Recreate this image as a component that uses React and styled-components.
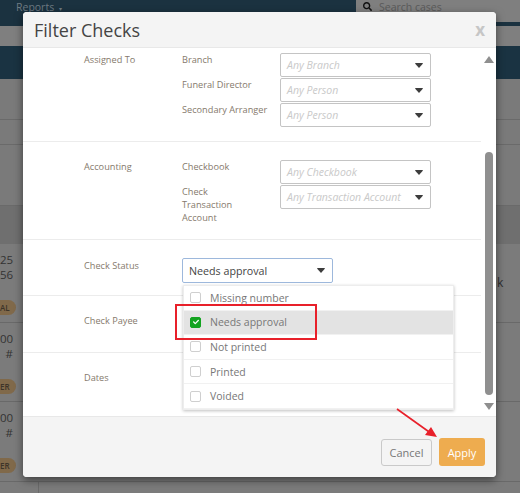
import styled, { createGlobalStyle } from "styled-components";
import { FaSearch, FaCheck } from "react-icons/fa";

const GlobalStyle = createGlobalStyle`
  html, body {
    margin: 0;
    padding: 0;
    background: #7b7b7b;
    font-family: "Open Sans", "Liberation Sans", sans-serif;
  }
  * {
    box-sizing: border-box;
  }
`;

const statuses = [
  { name: "Missing number" },
  { name: "Needs approval", checked: true },
  { name: "Not printed" },
  { name: "Printed" },
  { name: "Voided" },
];

const Caret = () => (
  <CaretIcon viewBox="0 0 8 5" width="8" height="5">
    <path d="M0 0.6 Q0 0 0.8 0 H7.2 Q8 0 8 0.6 L4 5 Z" fill="#3d3d3d" />
  </CaretIcon>
);

const Select = ({ text }) => (
  <SelectBox>
    <Placeholder>{text}</Placeholder>
    <Caret />
  </SelectBox>
);

const BackRow = ({ top, bottom, badge, h }) => (
  <TableRow h={h}>
    <Cell>{top}</Cell>
    <Cell>{bottom}</Cell>
    <Badge>{badge}</Badge>
  </TableRow>
);

const App = () => {
  return (
    <Page>
      <GlobalStyle />
      <TopBar>
        <NavLink>
          Reports <small>▾</small>
        </NavLink>
        <SearchBox>
          <FaSearch size={9} color="#111" />
          <span>Search cases</span>
        </SearchBox>
      </TopBar>
      <SubBar />
      <TealBar />
      <Strip h={14} />
      <Strip h={27} line />
      <Strip h={25} line />
      <Strip h={61} line />
      <DarkBand />
      <BackRow h={79} top="25" bottom="56" badge="AL" />
      <BackRow h={79} top="00" bottom="#" badge="ER" />
      <BackRow h={80} top="00" bottom="#" badge="ER" />
      <BottomStrip />
      <RightText>k</RightText>

      <Modal>
        <Header>
          <Title>Filter Checks</Title>
          <Close>x</Close>
        </Header>
        <Body>
          <Content>
            <Section h={94} pt={5}>
              <GroupLabel>Assigned To</GroupLabel>
              <Fields>
                <FieldRow>
                  <FieldLabel>Branch</FieldLabel>
                  <Select text="Any Branch" />
                </FieldRow>
                <FieldRow>
                  <FieldLabel>Funeral Director</FieldLabel>
                  <Select text="Any Person" />
                </FieldRow>
                <FieldRow>
                  <FieldLabel>Secondary Arranger</FieldLabel>
                  <Select text="Any Person" />
                </FieldRow>
              </Fields>
            </Section>
            <Section h={98} pt={18}>
              <GroupLabel>Accounting</GroupLabel>
              <Fields>
                <FieldRow>
                  <FieldLabel>Checkbook</FieldLabel>
                  <Select text="Any Checkbook" />
                </FieldRow>
                <FieldRow>
                  <FieldLabel narrow>Check Transaction Account</FieldLabel>
                  <Select text="Any Transaction Account" />
                </FieldRow>
              </Fields>
            </Section>
            <Section h={56} pt={18}>
              <GroupLabel pad={1}>Check Status</GroupLabel>
              <StatusSelect>
                <span>Needs approval</span>
                <Caret />
              </StatusSelect>
            </Section>
            <Section h={57} pt={18}>
              <GroupLabel>Check Payee</GroupLabel>
            </Section>
            <Section h={63} pt={18} last>
              <GroupLabel>Dates</GroupLabel>
            </Section>
          </Content>
          <ScrollBar>
            <ScrollArrow viewBox="0 0 10 7" width="10" height="7">
              <path d="M5 0 L10 7 H0 Z" fill="#8f8f8f" />
            </ScrollArrow>
            <Thumb />
            <ScrollArrow viewBox="0 0 10 7" width="10" height="7">
              <path d="M0 0 H10 L5 7 Z" fill="#8f8f8f" />
            </ScrollArrow>
          </ScrollBar>
          <Dropdown>
            {statuses.map((s) => (
              <Option key={s.name} active={s.checked}>
                <Check active={s.checked}>
                  {s.checked && <FaCheck size={6} color="#fff" />}
                </Check>
                {s.name}
              </Option>
            ))}
          </Dropdown>
        </Body>
        <Footer>
          <CancelButton>Cancel</CancelButton>
          <ApplyButton>Apply</ApplyButton>
        </Footer>
      </Modal>

      <RedBox />
      <Arrow viewBox="0 0 48 36" width="48" height="36">
        <line x1="1" y1="1" x2="36" y2="26" stroke="#e8202a" strokeWidth="1.6" />
        <path d="M41 29 L29 27 L35 19 Z" fill="#e8202a" />
      </Arrow>
    </Page>
  );
};

const Page = styled.div`
  position: relative;
  width: 520px;
  height: 493px;
  overflow: hidden;
  background: #7b7b7b;
  display: flex;
  flex-direction: column;
`;
const TopBar = styled.div`
  height: 26px;
  flex: none;
  background: #1b3240;
  display: flex;
  justify-content: space-between;
  align-items: flex-start;
  padding-left: 16px;
`;
const NavLink = styled.div`
  font-size: 10.5px;
  line-height: 14px;
  color: #6e7a82;
  & > small {
    font-size: 6px;
    margin-left: 2px;
  }
`;
const SearchBox = styled.div`
  width: 164px;
  height: 22px;
  background: #7f7f7f;
  display: flex;
  align-items: flex-start;
  gap: 7px;
  padding: 2px 0 0 7px;
  font-size: 10.5px;
  line-height: 10px;
  color: #5a5a5a;
`;
const SubBar = styled.div`
  height: 20px;
  flex: none;
  background: #7f7f7f;
`;
const TealBar = styled.div`
  height: 33px;
  flex: none;
  background: #1a3342;
`;
const Strip = styled.div`
  height: ${(p) => p.h}px;
  flex: none;
  background: #7a7a7a;
  border-bottom: ${(p) => (p.line ? "1px solid #6a6a6a" : "none")};
`;
const DarkBand = styled.div`
  height: 38px;
  flex: none;
  background: #6f6f6f;
`;
const TableRow = styled.div`
  height: ${(p) => p.h}px;
  flex: none;
  border-bottom: 1px solid #696969;
  width: 520px;
  padding-top: 8px;
  display: flex;
  flex-direction: column;
`;
const Cell = styled.div`
  width: 13px;
  text-align: right;
  font-size: 11.5px;
  line-height: 15px;
  color: #333;
`;
const Badge = styled.div`
  width: 16px;
  height: 15px;
  margin-top: 18px;
  border-radius: 0 8px 8px 0;
  background: #80694a;
  color: #3d3429;
  font-size: 8px;
  font-weight: 600;
  line-height: 15px;
`;
const BottomStrip = styled.div`
  flex: 1;
  margin-left: 38px;
  border-left: 1px solid #6a6a6a;
`;
const RightText = styled.div`
  position: absolute;
  left: 497px;
  top: 274px;
  font-size: 12px;
  color: #2e2e2e;
`;
const Modal = styled.div`
  position: absolute;
  left: 23px;
  top: 12px;
  width: 473px;
  height: 465px;
  background: #fff;
  border-radius: 4px;
  box-shadow: 0 3px 9px rgba(0, 0, 0, 0.5);
  display: flex;
  flex-direction: column;
  overflow: hidden;
`;
const Header = styled.div`
  height: 36px;
  flex: none;
  background: #f4f4f4;
  border-bottom: 1px solid #e8e8e8;
  display: flex;
  justify-content: space-between;
  align-items: center;
  padding: 0 11px;
`;
const Title = styled.div`
  font-size: 18px;
  color: #444;
`;
const Close = styled.div`
  font-size: 17px;
  font-weight: 700;
  color: #c6c6c6;
`;
const Body = styled.div`
  position: relative;
  height: 368px;
  flex: none;
  display: flex;
`;
const Content = styled.div`
  width: 458px;
  flex: none;
`;
const Section = styled.div`
  height: ${(p) => p.h}px;
  padding: ${(p) => p.pt}px 0 0 61px;
  border-bottom: ${(p) => (p.last ? "none" : "1px solid #ececec")};
  display: flex;
`;
const GroupLabel = styled.div`
  width: 98px;
  flex: none;
  font-size: 9.2px;
  line-height: 13px;
  padding-top: ${(p) => p.pad || 0}px;
  color: #85796c;
`;
const Fields = styled.div`
  display: flex;
  flex-direction: column;
  gap: 1px;
`;
const FieldRow = styled.div`
  display: flex;
`;
const FieldLabel = styled.div`
  width: 98px;
  flex: none;
  font-size: 9.2px;
  line-height: 13px;
  color: #85796c;
  padding-right: ${(p) => (p.narrow ? "40px" : "0")};
  white-space: ${(p) => (p.narrow ? "normal" : "nowrap")};
`;
const SelectBox = styled.div`
  width: 151px;
  height: 24px;
  flex: none;
  border: 1px solid #c4c4c4;
  border-radius: 2px;
  background: #fff;
  display: flex;
  align-items: center;
  justify-content: space-between;
  padding: 0 7px 0 6px;
`;
const Placeholder = styled.span`
  font-size: 10.5px;
  font-style: italic;
  color: #c9c9c9;
  margin-top: -1px;
`;
const CaretIcon = styled.svg`
  flex: none;
`;
const StatusSelect = styled.div`
  width: 151px;
  height: 25px;
  flex: none;
  border: 1px solid #9db8dc;
  border-radius: 2px;
  display: flex;
  align-items: center;
  justify-content: space-between;
  padding: 0 7px 0 6px;
  font-size: 10.7px;
  color: #444;
`;
const ScrollBar = styled.div`
  width: 15px;
  flex: none;
  display: flex;
  flex-direction: column;
  align-items: center;
  padding-top: 8px;
`;
const ScrollArrow = styled.svg`
  flex: none;
`;
const Thumb = styled.div`
  width: 8px;
  height: 243px;
  margin: 89px 0 8px;
  border-radius: 4px;
  background: #8f8f8f;
`;
const Dropdown = styled.div`
  position: absolute;
  left: 160px;
  top: 237px;
  width: 271px;
  background: #fff;
  border: 1px solid #ededed;
  box-shadow: 0 1px 3px rgba(0, 0, 0, 0.25);
`;
const Option = styled.div`
  height: 24.6px;
  display: flex;
  align-items: center;
  gap: 9px;
  padding-left: 6px;
  font-size: 10.5px;
  color: #777;
  background: ${(p) => (p.active ? "#e3e3e3" : "#fff")};
  border-bottom: 1px solid #f1f1f1;
`;
const Check = styled.span`
  width: 11px;
  height: 11px;
  flex: none;
  border-radius: 2px;
  border: 1px solid ${(p) => (p.active ? "#13a320" : "#cfcfcf")};
  background: ${(p) => (p.active ? "#13a320" : "#fff")};
  display: flex;
  align-items: center;
  justify-content: center;
`;
const Footer = styled.div`
  flex: 1;
  background: #f4f4f4;
  border-top: 1px solid #e8e8e8;
  display: flex;
  justify-content: flex-end;
  align-items: flex-end;
  gap: 7px;
  padding: 0 11px 11px 0;
`;
const CancelButton = styled.div`
  width: 51px;
  height: 27px;
  border: 1px solid #c9c9c9;
  border-radius: 3px;
  display: flex;
  align-items: center;
  justify-content: center;
  font-size: 11px;
  color: #777;
`;
const ApplyButton = styled.div`
  width: 46px;
  height: 28px;
  border-radius: 3px;
  background: #eeac4f;
  display: flex;
  align-items: center;
  justify-content: center;
  font-size: 11px;
  color: #fff;
`;
const RedBox = styled.div`
  position: absolute;
  left: 175px;
  top: 304px;
  width: 142px;
  height: 36px;
  border: 2px solid #e8202a;
`;
const Arrow = styled.svg`
  position: absolute;
  left: 396px;
  top: 408px;
`;

export default App;
